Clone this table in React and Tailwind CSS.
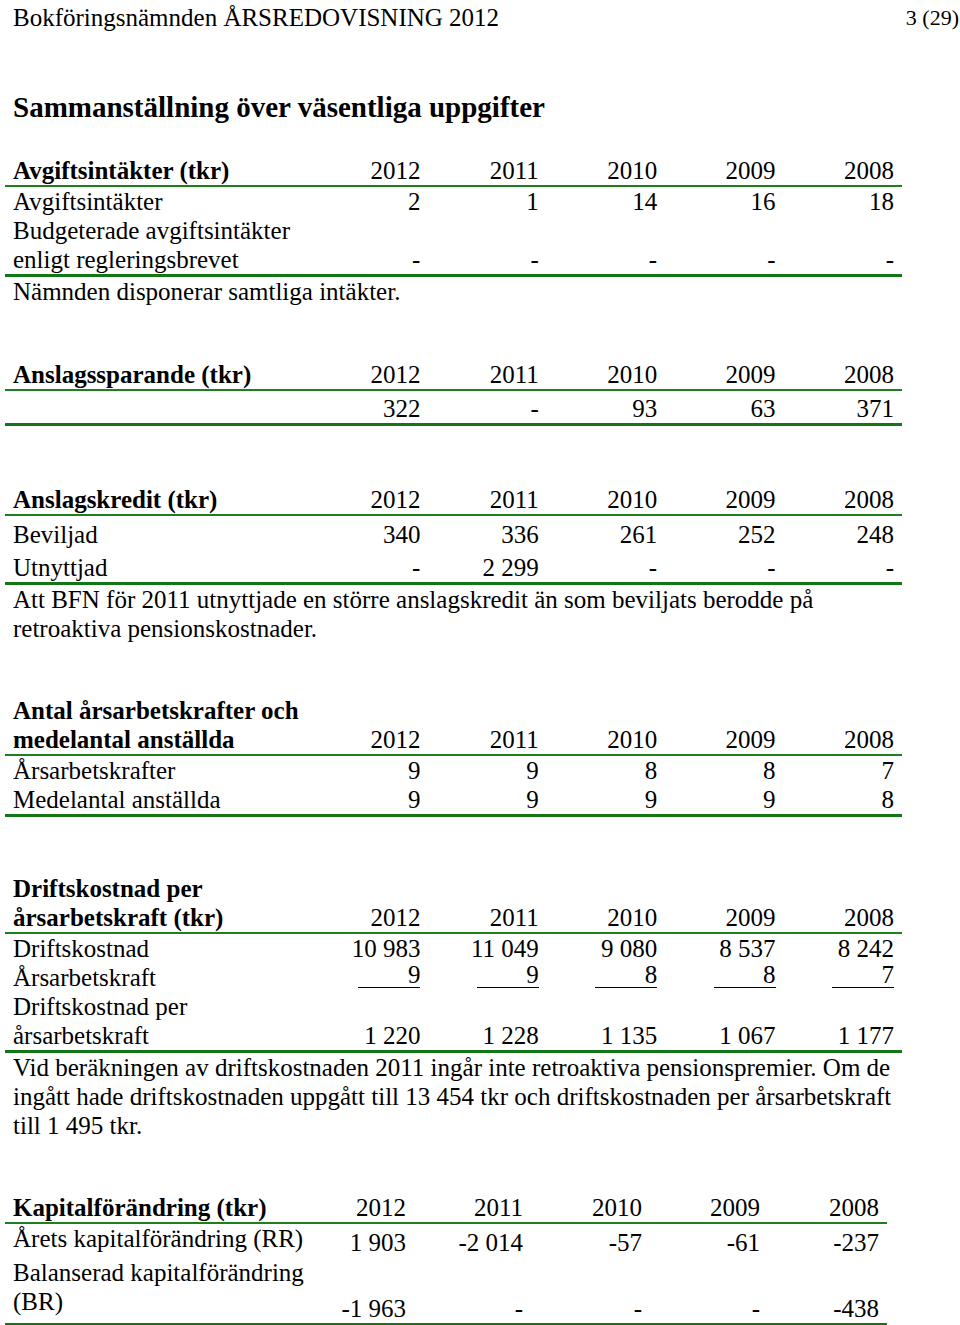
import React from "react";

const years = ["2012", "2011", "2010", "2009", "2008"];
const GRID = "grid grid-cols-[305px_repeat(5,1fr)]";

function HeaderRow({ label }) {
  return (
    <div className={`${GRID} items-end border-b-2 border-[#1d7f1d]`}>
      <div className="px-2 font-bold leading-[29px] whitespace-nowrap">{label}</div>
      {years.map((y) => (
        <div key={y} className="px-2 text-right leading-[29px]">{y}</div>
      ))}
    </div>
  );
}

function Row({ label, values, h = "h-[29px]", underline = false }) {
  return (
    <div className={`${GRID} ${h} items-end`}>
      <div className="px-2 leading-[29px] whitespace-nowrap">{label}</div>
      {values.map((v, i) => (
        <div key={i} className="px-2 text-right leading-[29px] flex justify-end whitespace-nowrap">
          {underline ? (
            <span className="inline-block w-[62px] text-right border-b border-black leading-[24px] mb-[4px]">{v}</span>
          ) : (
            <span>{v}</span>
          )}
        </div>
      ))}
    </div>
  );
}

function Thick() {
  return <div className="h-[3px] bg-[#147514]" />;
}

export default function App() {
  return (
    <div className="w-[960px] h-[1325px] bg-white text-black overflow-hidden [font-family:'Liberation_Serif',serif] text-[25px] relative">
      {/* Page header */}
      <div className="flex justify-between items-start pl-[13px] pt-[3px]">
        <div className="leading-[29px] text-[25px]">Bokföringsnämnden ÅRSREDOVISNING 2012</div>
        <div className="leading-[29px] text-[22px] whitespace-nowrap pr-[1px]">3 (29)</div>
      </div>

      <h1 className="pl-[13px] mt-[59px] font-bold text-[29px] leading-[33px]">
        Sammanställning över väsentliga uppgifter
      </h1>

      <div className="ml-[5px] w-[897px]">
        {/* Table 1 */}
        <div className="mt-[32px]">
          <HeaderRow label="Avgiftsintäkter (tkr)" />
          <Row label="Avgiftsintäkter" values={["2", "1", "14", "16", "18"]} />
          <div className={`${GRID} items-end`}>
            <div className="px-2 leading-[29px] whitespace-nowrap">Budgeterade avgiftsintäkter<br />enligt regleringsbrevet</div>
            {["-", "-", "-", "-", "-"].map((v, i) => (
              <div key={i} className="px-2 text-right leading-[29px]">{v}</div>
            ))}
          </div>
          <Thick />
          <div className="px-2 leading-[29px]">Nämnden disponerar samtliga intäkter.</div>
        </div>

        {/* Table 2 */}
        <div className="mt-[54px]">
          <HeaderRow label="Anslagssparande (tkr)" />
          <Row label="" values={["322", "-", "93", "63", "371"]} h="h-[32px]" />
          <Thick />
        </div>

        {/* Table 3 */}
        <div className="mt-[59px]">
          <HeaderRow label="Anslagskredit (tkr)" />
          <Row label="Beviljad" values={["340", "336", "261", "252", "248"]} h="h-[33px]" />
          <Row label="Utnyttjad" values={["-", "2 299", "-", "-", "-"]} h="h-[33px]" />
          <Thick />
          <div className="px-2 leading-[29px] whitespace-nowrap">
            Att BFN för 2011 utnyttjade en större anslagskredit än som beviljats berodde på
            <br />
            retroaktiva pensionskostnader.
          </div>
        </div>

        {/* Table 4 */}
        <div className="mt-[53px]">
          <HeaderRow label={<>Antal årsarbetskrafter och<br />medelantal anställda</>} />
          <Row label="Årsarbetskrafter" values={["9", "9", "8", "8", "7"]} />
          <Row label="Medelantal anställda" values={["9", "9", "9", "9", "8"]} />
          <Thick />
        </div>

        {/* Table 5 */}
        <div className="mt-[57px]">
          <HeaderRow label={<>Driftskostnad per<br />årsarbetskraft (tkr)</>} />
          <Row label="Driftskostnad" values={["10 983", "11 049", "9 080", "8 537", "8 242"]} />
          <Row label="Årsarbetskraft" values={["9", "9", "8", "8", "7"]} underline />
          <div className={`${GRID} items-end`}>
            <div className="px-2 leading-[29px] whitespace-nowrap">Driftskostnad per<br />årsarbetskraft</div>
            {["1 220", "1 228", "1 135", "1 067", "1 177"].map((v, i) => (
              <div key={i} className="px-2 text-right leading-[29px] whitespace-nowrap">{v}</div>
            ))}
          </div>
          <Thick />
          <div className="px-2 leading-[29px] whitespace-nowrap">
            Vid beräkningen av driftskostnaden 2011 ingår inte retroaktiva pensionspremier. Om de
            <br />
            ingått hade driftskostnaden uppgått till 13 454 tkr och driftskostnaden per årsarbetskraft
            <br />
            till 1 495 tkr.
          </div>
        </div>

        {/* Table 6 */}
        <div className="mt-[53px] w-[882px]">
          <div className="grid grid-cols-[305px_104px_117px_119px_118px_1fr] items-end border-b-2 border-[#1d7f1d]">
            <div className="px-2 font-bold leading-[29px] whitespace-nowrap">Kapitalförändring (tkr)</div>
            {years.map((y) => (
              <div key={y} className="px-2 text-right leading-[29px]">{y}</div>
            ))}
          </div>
          <div className="grid grid-cols-[305px_104px_117px_119px_118px_1fr] h-[33px] items-end">
            <div className="px-2 leading-[29px] self-start whitespace-nowrap">Årets kapitalförändring (RR)</div>
            {["1 903", "-2 014", "-57", "-61", "-237"].map((v, i) => (
              <div key={i} className="px-2 text-right leading-[29px] whitespace-nowrap">{v}</div>
            ))}
          </div>
          <div className="grid grid-cols-[305px_104px_117px_119px_118px_1fr] h-[66px] items-end">
            <div className="px-2 leading-[29px] self-start pt-px whitespace-nowrap">Balanserad kapitalförändring<br />(BR)</div>
            {["-1 963", "-", "-", "-", "-438"].map((v, i) => (
              <div key={i} className="px-2 text-right leading-[29px] whitespace-nowrap">{v}</div>
            ))}
          </div>
          <Thick />
        </div>
      </div>
    </div>
  );
}
